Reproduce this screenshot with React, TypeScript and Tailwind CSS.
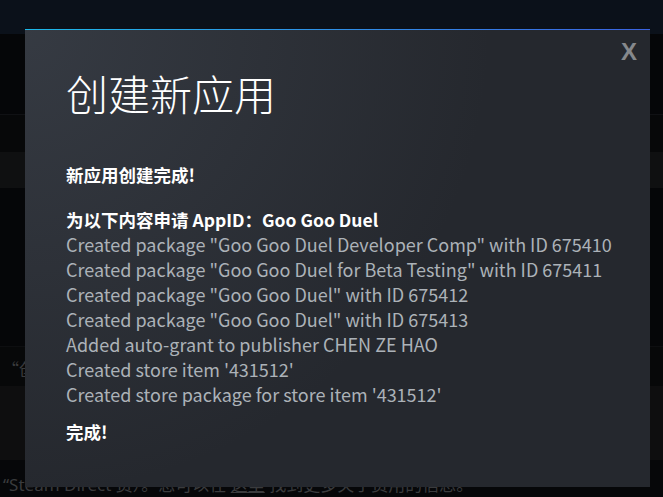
const lines = [
  'Created package "Goo Goo Duel Developer Comp" with ID 675410',
  'Created package "Goo Goo Duel for Beta Testing" with ID 675411',
  'Created package "Goo Goo Duel" with ID 675412',
  'Created package "Goo Goo Duel" with ID 675413',
  "Added auto-grant to publisher CHEN ZE HAO",
  "Created store item '431512'",
  "Created store package for store item '431512'",
];

export default function App() {
  return (
    <div
      className="relative w-[663px] h-[497px] overflow-hidden bg-[#050608]"
      style={{ fontFamily: '"Noto Sans CJK SC", "Noto Sans", sans-serif' }}
    >
      {/* dimmed page behind the dialog */}
      <div className="flex flex-col">
        <div className="h-[34px] bg-[#0b111a]" />
        <div className="h-[80px] bg-[#050608]" />
        <div className="h-[38px] bg-[#070809] border-t border-[#101114]" />
        <div className="h-[36px] bg-[#0f1011]" />
        <div className="h-[158px] bg-[#050608]" />
        <div className="h-[40px] bg-[#070809] border-t border-[#0d0e10] flex items-center pt-[4px]">
          <div className="w-[25px] overflow-hidden whitespace-nowrap pl-[2px] text-[17px] text-[#3a3b3d]">“创</div>
        </div>
        <div className="h-[74px] bg-[#0e0e0f]" />
        <div
          className="h-[37px] bg-[#060709] flex items-end pl-[3px] text-[17px] leading-[24px] text-[#3a3b3d] whitespace-nowrap"
          style={{ fontFamily: '"Noto Sans", "Noto Sans CJK SC", sans-serif' }}
        >
          <span>
            “Steam Direct 费）。您可以在 <span className="underline">这里</span> 找到更多关于费用的信息。
          </span>
        </div>
      </div>

      {/* dialog */}
      <div className="absolute left-[25px] top-[29px] w-[625px] h-[458px] bg-[#25282e] bg-[radial-gradient(circle_at_top_left,rgba(74,81,92,0.45)_0%,rgba(75,81,92,0)_60%)]">
        <div className="h-px bg-gradient-to-r from-[#1cb8e8] to-[#3a62e0]" />
        <button
          className="absolute right-[13px] top-[11px] text-[24px] leading-none font-bold text-[#85888c]"
          style={{ fontFamily: '"Liberation Sans", sans-serif' }}
        >
          X
        </button>
        <div className="pl-[41px] pr-[20px] pt-[37px]">
          <h1 className="text-[42px] leading-[52px] font-light text-white">创建新应用</h1>
          <div className="mt-[43px] text-[17.5px] leading-[25px] font-bold text-white">新应用创建完成!</div>
          <div className="mt-[20px] text-[17.5px] leading-[25px] font-bold text-white">
            为以下内容申请 AppID：Goo Goo Duel
          </div>
          {lines.map((l) => (
            <div key={l} className="text-[18px] leading-[25px] text-[#acb2b8] whitespace-nowrap">
              {l}
            </div>
          ))}
          <div className="mt-[12px] text-[17.5px] leading-[25px] font-bold text-white">完成!</div>
        </div>
      </div>
    </div>
  );
}
